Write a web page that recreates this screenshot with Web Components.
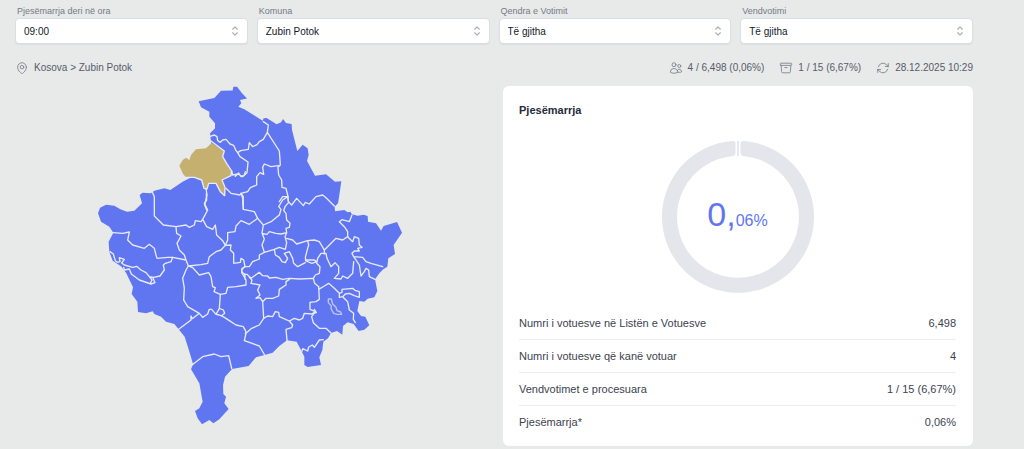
<!DOCTYPE html>
<html lang="sq">
<head>
<meta charset="utf-8">
<meta name="viewport" content="width=device-width, initial-scale=1">
<title>Pjesëmarrja</title>
<style>
  body { margin: 0; background: #e8eae9; font-family: "Liberation Sans", Arial, sans-serif; font-size: 10px; line-height: 14px; color: #374151; }
</style>
</head>
<body>
<turnout-page>
  <filter-field slot="filters" label="Pjesëmarrja deri në ora" value="09:00"></filter-field>
  <filter-field slot="filters" label="Komuna" value="Zubin Potok"></filter-field>
  <filter-field slot="filters" label="Qendra e Votimit" value="Të gjitha"></filter-field>
  <filter-field slot="filters" label="Vendvotimi" value="Të gjitha"></filter-field>
  <icon-text slot="place" icon="pin">Kosova &gt; Zubin Potok</icon-text>
  <icon-text slot="status" icon="users">4 / 6,498 (0,06%)</icon-text>
  <icon-text slot="status" icon="box">1 / 15 (6,67%)</icon-text>
  <icon-text slot="status" icon="refresh">28.12.2025 10:29</icon-text>
  <kosovo-map slot="map"></kosovo-map>
  <turnout-card slot="card" heading="Pjesëmarrja">
    <turnout-ring slot="chart" whole="0," part="06%"></turnout-ring>
    <stat-table></stat-table>
  </turnout-card>
</turnout-page>

<template id="t-page">
  <style>
    :host { display: block; padding: 4px 51px 2px 15px; }
    .filters { display: grid; grid-template-columns: repeat(4, minmax(0, 1fr)); gap: 9px; }
    .meta { display: flex; justify-content: space-between; padding: 17px 0 11px; }
    .status { display: flex; gap: 15px; }
    .main { display: grid; grid-template-columns: repeat(2, minmax(0, 1fr)); gap: 18px; align-items: start; }
  </style>
  <div class="filters"><slot name="filters"></slot></div>
  <div class="meta"><slot name="place"></slot><div class="status"><slot name="status"></slot></div></div>
  <div class="main"><slot name="map"></slot><slot name="card"></slot></div>
</template>

<template id="t-field">
  <style>
    :host { display: block; }
    label { display: block; padding: 0 2px; font-size: 9px; line-height: 14px; color: #747a86; }
    .box { display: grid; align-items: center; }
    select { grid-area: 1 / 1; appearance: none; width: 100%; height: 26px; margin: 0; padding: 1px 24px 0 8px; border: 1px solid #dadde2; border-radius: 4px; background: #fff; box-shadow: 0 1px 1px #0000000d; font: inherit; color: #111827; }
    svg { grid-area: 1 / 1; justify-self: end; margin-right: 6px; pointer-events: none; }
  </style>
  <label for="choice"></label>
  <div class="box">
    <select id="choice"><option></option></select>
    <svg width="14" height="14" viewBox="0 0 24 24" fill="none" stroke="#a9adb6" stroke-width="2" stroke-linecap="round" stroke-linejoin="round" aria-hidden="true"><path d="M8 15l4 4 4-4M8 9l4-4 4 4"/></svg>
  </div>
</template>

<template id="t-icon">
  <style>
    :host { display: flex; align-items: center; gap: 5px; color: #565b69; }
    svg { color: #7c818d; }
  </style>
  <svg width="14" height="14" viewBox="0 0 24 24" fill="none" stroke="currentColor" stroke-width="1.5" stroke-linecap="round" stroke-linejoin="round" aria-hidden="true"><path/></svg>
  <span><slot></slot></span>
</template>

<template id="t-card">
  <style>
    :host { display: block; padding: 16px 17px 8px 16px; border-radius: 6px; background: #fff; }
    h2 { margin: 0 0 22px; font-size: 11px; line-height: 16px; font-weight: 700; color: #252b3b; }
    .chart { display: flex; justify-content: center; margin-bottom: 13px; }
  </style>
  <h2></h2>
  <div class="chart"><slot name="chart"></slot></div>
  <slot></slot>
</template>

<template id="t-ring">
  <style>
    :host { display: grid; place-items: center; color: #6076f1; }
    svg, p { grid-area: 1 / 1; }
    p { margin: 0; font-size: 16px; line-height: 36px; }
    .whole { font-size: 34px; }
  </style>
  <svg width="154" height="154" viewBox="-77 -77 154 154" aria-hidden="true">
    <path fill="#e4e6eb" d="M5 -76Q2.500 -76 2.500 -73.500V-64Q2.500 -61.300 5 -61A61 61 0 1 1 -5 -61Q-2.500 -61.300 -2.500 -64V-73.500Q-2.500 -76 -5 -76A76 76 0 1 0 5 -76Z"/>
    <path stroke="#cbd2fb" d="M0 -76V-61"/>
  </svg>
  <p><span class="whole"></span><span class="part"></span></p>
</template>

<template id="t-stats">
  <style>
    :host { display: block; }
    table { width: 100%; border-collapse: collapse; font-size: 11px; line-height: 16px; color: #3c424f; }
    th, td { height: 16px; padding: 8px 0; font-weight: 400; text-align: left; }
    tr + tr > * { border-top: 1px solid #eceff2; }
    td { text-align: right; }
  </style>
  <table>
    <tbody>
      <tr><th scope="row">Numri i votuesve në Listën e Votuesve</th><td>6,498</td></tr>
      <tr><th scope="row">Numri i votuesve që kanë votuar</th><td>4</td></tr>
      <tr><th scope="row">Vendvotimet e procesuara</th><td>1 / 15 (6,67%)</td></tr>
      <tr><th scope="row">Pjesëmarrja*</th><td>0,06%</td></tr>
    </tbody>
  </table>
</template>

<template id="t-map">
  <style>
    :host { display: flex; justify-content: center; }
    svg { display: block; width: 100%; max-width: 320px; height: auto; }
    .edges { fill: none; stroke: #e8eafd; stroke-width: 4; stroke-linejoin: round; stroke-linecap: round; }
    .inner { stroke: #bcc4f9; }
  </style>
  <svg viewBox="272 258 960 1020" role="img" aria-label="Harta e komunave">
    <path transform="scale(3)" fill="#6076f1" d="M199.300 101.300 215 98 221.700 90.700 233.300 90.500 234 86.700 237.700 86.700 242.300 92.700 247.700 98.500 240.700 100 242 103.300 239 106.700 245 109.300 263.300 120.700 264.300 118.300 267.300 118 277.300 124.300 281.700 122.300 283.700 119 286.700 123 292.300 124 292.700 130 298 151 303.300 144.700 308.300 148.300 309.300 155 307.700 161 315.700 175.700 326.700 174.300 335.700 181.700 342 181.300 340 195 338.700 203.300 335.300 206.700 335.700 211.300 345 210 348.300 212.300 351 211.700 352.700 214.300 358.300 215.700 364.300 214.700 368.300 216 368.700 221.700 376.700 223.300 381.700 230.700 384.300 226 397.700 222 402.700 232.700 394.300 245 395.700 254 389 258.300 388 266.700 384 269.300 380 273.300 375.700 279.300 378 291 375 297.300 368.300 298.700 365 301.700 360 301 358 311 361.700 316 366 316.700 370 325.300 365 329.700 359.300 331 354.300 324 348.300 322.300 343.700 326 343 334.700 337.700 331 331.700 333 328.700 338.300 324 341.700 323 350 320 357.300 321.700 365 315 366 308.300 367 305 365 305 356.700 301.700 350 297.300 341.700 287.700 340.300 280 346 273.300 352.700 265.300 355 256.700 357.300 249.300 366 232.700 369 225.700 376.700 223.700 385 224 394 226.700 396.700 225 403.300 229.300 409 220 419.300 214 423.300 210 420 202.700 424.300 198.300 418.300 195.700 411 200 408.300 203.300 401.700 200 383.300 191.700 369.300 193.700 364 189 348.300 185.300 336.700 179.300 329.300 175 324 166.700 321.700 161.700 316.700 155 314 153.300 311.300 146.700 313.300 138.700 312 138 301.700 132.300 294 133.700 287.300 126.700 272.700 122 266.500 113.300 260.700 110 251.700 109.300 241.700 114 232.700 110 226.700 101.700 221.700 98.700 213.300 100.700 207.700 106.700 204.700 115 205.700 121 209.300 127.700 211.700 135 210.700 142.700 203.300 140.300 195 143.300 192.700 151.700 193.300 155 190.700 165 188.300 171 190 183.300 181.700 190 178.300 205 175 213 150 211.700 142 210.700 133.300 215.700 128.300 215.700 123.300 210 116.700 210 111.700 201.700 107.300Z"/>
    <g transform="translate(510 240)">
      <path fill="#c6b070" d="M50 292 75 292 97 300 104 325 113 327 118 310 140 310 153 335 166 347 167 322 158 300 185 287 187 273 172 250 160 230 165 213 127 189 110 205 80 208 65 225 60 240 50 233 40 240 30 257 41 282Z"/>
      <g class="edges">
        <path d="M125 183 165 213 160 230 172 250 187 273 185 287 158 300 167 322 166 347 153 335 140 310 118 310 113 327 104 325 97 300 75 292 50 292"/>
        <path d="M122 169 135 165 143 170 145 182 153 187 160 180 170 178 182 192 193 196 200 212 205 218M205 218 214 212 237 208 240 188 250 200 263 194 270 185 282 178 294 157 297 135 282 125M294 157 330 213 333 255 326 262 328 285 337 300 338 322 350 325 355 345 357 365 367 375 382 355 402 377 408 367 420 372 440 350 460 345 470 353 495 378"/>
        <path d="M205 218 212 230 236 246 233 278 220 290 205 282 190 285 187 273M198 289 208 279 215 290 225 285 228 275M328 257 305 260 285 252 280 262 283 283 272 278 262 290 262 315 243 323 235 335 215 340 212 345 185 340 170 325M215 340 222 350 220 365 222 388M357 350 340 350 330 365M110 325 113 345 106 375 112 390"/>
      </g>
    </g>
    <g class="edges" transform="translate(270 510)">
      <path d="M351 70 352 90 345 100 355 120 340 148M190 68 195 80 195 138 222 165 260 170 290 165 300 172 315 165 318 152 335 155 340 148 352 170 370 178 378 165 382 195 400 212 408 226M260 170 262 190 275 198 263 220 270 240 285 255 290 270 297 288M72 188 100 190 120 186 115 210 130 225 165 235 180 223 195 235 200 255 203 265 235 262 250 262 290 270"/>
      <path d="M62 245 72 252 78 272 84 277 92 275 90 263 105 268 97 279 105 285 130 292 142 289 155 300 170 308 180 320 193 322 212 318 225 300 222 285 228 280 245 275 250 262M103 292 105 300 120 297 126 312 150 330 185 342 197 338 190 322M180 320 188 330 184 338"/>
      <path d="M297 288 335 284 355 280 360 260 380 245 395 240 408 226 425 225 423 240 433 250 433 280 453 277 455 265 463 270 467 290M297 288 290 300 280 325 285 355 283 390M297 288 310 293 330 315 358 308 365 320 370 350 378 353 374 365 393 373 410 370 415 352 440 350 470 345 470 330 457 307 457 297 467 290M467 313 467 328M408 226 415 210 415 188 437 185 440 168 455 152 480 163 505 145M462 90 462 118 495 125 505 145M455 70 462 90"/>
    </g>
    <g class="edges" transform="translate(720 510)">
      <path d="M55 145 72 165 97 154 120 135 125 118 118 110 130 90 145 80 148 97 137 110 133 122 140 130 142 150 152 160 150 172 140 175 142 188 125 192 110 190 90 185 83 193 68 190 72 165M68 190 75 207 68 225 75 247 105 238 120 232 138 238 142 218 137 200 142 188"/>
      <path d="M75 247 60 255 60 267 40 275 30 290 17 290 8 297 8 307 17 313 23 313 35 325 60 307 70 317 85 318 90 324 110 322 130 328 150 325 180 327 222 325 226 340 238 350M142 205 160 210 172 222 205 212 225 210 240 215 255 240 290 205 310 210 325 200 325 185 315 170 300 155 308 149 330 155 338 135"/>
      <path d="M325 200 340 215 345 200 358 205 360 225 368 232 355 235 360 243 345 243 338 250 343 260 370 262 380 275 395 280 430 290M343 260 360 285 365 318 375 305 380 295 388 300 390 320 407 328M343 275 340 310 325 325 310 318 305 327 285 325 298 310 298 290 287 278 275 290 263 265 260 250 245 250 235 265 232 280 242 290 240 310 228 315 222 325M255 240 255 252M205 212 208 225 205 235 198 262 200 273 218 280 232 275 225 270 198 270"/>
      <path d="M105 238 108 255 120 262 128 275 138 278 145 265 135 250 150 245 160 265 163 280 175 290 198 278"/>
    </g>
    <g class="edges" transform="translate(720 750)">
      <path d="M238 110 240 148 230 155 212 157 212 178 228 185 217 200 222 218 240 235 260 235 275 249M238 118 255 108 268 100 285 115 300 130 308 127 308 118 340 115 347 121 360 125 360 142 345 137 330 130 318 132 310 140 300 142 300 130M310 140 325 155 330 180 343 190 342 208 348 218"/>
      <path class="inner" d="M267 147 276 147 280 162 290 172 293 182 304 186 307 193 293 193 283 190 275 176 276 168 267 158Z"/>
      <path d="M150 88 140 95 140 105 120 118 118 138 100 145 80 145 70 155 62 143 50 145 62 135 55 120 62 105 35 100 38 90 30 82M70 155 73 205 60 225 37 235 20 250M73 205 85 198 100 200 108 185 118 187 120 200 150 213 165 205 180 210 190 205 195 190 218 192 228 185M140 209 150 213 160 225 157 233 140 238 143 271M20 250 15 272 60 288 76 315M188 303 190 296 205 303 208 291 219 285 225 292 240 270 252 269M225 178 231 188 220 190"/>
    </g>
    <g class="edges" transform="translate(360 780)">
      <path d="M178 208 215 180 215 168 219 176 240 160 250 172 265 162 270 148 277 148 290 163 300 165 315 172 330 182 350 195 372 200 380 215 378 222M193 120 205 140 240 160M290 163 300 145 312 150 316 160 307 167 293 164M300 145 303 103M218 315 250 290 285 282 305 290 328 287 337 325"/>
    </g>
  </svg>
</template>

<script>
  const stamp = (host, id) => {
    const root = host.attachShadow({ mode: 'open' });
    root.append(document.getElementById(id).content.cloneNode(true));
    return root;
  };

  const ICONS = {
    pin: 'M15 10.5a3 3 0 1 1-6 0 3 3 0 0 1 6 0ZM19.5 10.5c0 7.142-7.5 11.25-7.5 11.25S4.500 17.642 4.500 10.500a7.500 7.500 0 1 1 15 0Z',
    users: 'M15 19.128a9.380 9.380 0 0 0 2.625.372 9.337 9.337 0 0 0 4.121-.952 4.125 4.125 0 0 0-7.533-2.493M15 19.128v-.003c0-1.113-.285-2.160-.786-3.070M15 19.128v.106A12.318 12.318 0 0 1 8.624 21c-2.331 0-4.512-.645-6.374-1.766l-.001-.109a6.375 6.375 0 0 1 11.964-3.070M12 6.375a3.375 3.375 0 1 1-6.750 0 3.375 3.375 0 0 1 6.750 0Zm8.250 2.250a2.625 2.625 0 1 1-5.250 0 2.625 2.625 0 0 1 5.250 0Z',
    box: 'm20.250 7.500-.625 10.632a2.250 2.250 0 0 1-2.247 2.118H6.622a2.250 2.250 0 0 1-2.247-2.118L3.750 7.500M10 11.250h4M3.375 7.500h17.250c.621 0 1.125-.504 1.125-1.125v-1.500c0-.621-.504-1.125-1.125-1.125H3.375c-.621 0-1.125.504-1.125 1.125v1.500c0 .621.504 1.125 1.125 1.125Z',
    refresh: 'M16.023 9.348h4.992v-.001M2.985 19.644v-4.992m0 0h4.992m-4.993 0 3.181 3.183a8.250 8.250 0 0 0 13.803-3.700M4.031 9.865a8.250 8.250 0 0 1 13.803-3.700l3.181 3.182m0-4.991v4.990'
  };

  customElements.define('turnout-page', class extends HTMLElement {
    constructor() { super(); stamp(this, 't-page'); }
  });
  customElements.define('filter-field', class extends HTMLElement {
    connectedCallback() {
      if (this.shadowRoot) return;
      const root = stamp(this, 't-field');
      root.querySelector('label').textContent = this.getAttribute('label');
      root.querySelector('option').textContent = this.getAttribute('value');
    }
  });
  customElements.define('icon-text', class extends HTMLElement {
    connectedCallback() {
      if (this.shadowRoot) return;
      stamp(this, 't-icon').querySelector('path').setAttribute('d', ICONS[this.getAttribute('icon')]);
    }
  });
  customElements.define('turnout-card', class extends HTMLElement {
    connectedCallback() {
      if (this.shadowRoot) return;
      stamp(this, 't-card').querySelector('h2').textContent = this.getAttribute('heading');
    }
  });
  customElements.define('turnout-ring', class extends HTMLElement {
    connectedCallback() {
      if (this.shadowRoot) return;
      const root = stamp(this, 't-ring');
      root.querySelector('.whole').textContent = this.getAttribute('whole');
      root.querySelector('.part').textContent = this.getAttribute('part');
    }
  });
  customElements.define('stat-table', class extends HTMLElement {
    constructor() { super(); stamp(this, 't-stats'); }
  });
  customElements.define('kosovo-map', class extends HTMLElement {
    constructor() { super(); stamp(this, 't-map'); }
  });
</script>
</body>
</html>
